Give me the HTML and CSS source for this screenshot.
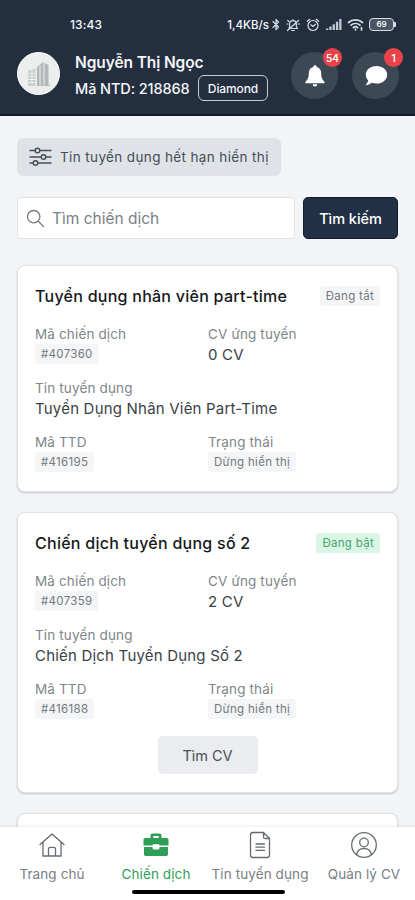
FILE: index.html
```html
<!DOCTYPE html>
<html lang="vi">
<head>
<meta charset="utf-8">
<meta name="viewport" content="width=device-width, initial-scale=1">
<title>Chiến dịch</title>
<link rel="stylesheet" href="styles.css">
</head>
<body>
<div class="app">
  <header class="header">
    <div class="status">
      <span class="clock">13:43</span>
      <div class="status-right">
        <span class="rate">1,4KB/s</span>
        <svg class="s-bt" width="8" height="13" viewBox="0 0 8 13"><path d="M1 3.500 6.500 9 4 11.500v-10L6.500 4 1 9.500"/></svg>
        <svg class="s-mute" width="14" height="14" viewBox="0 0 14 14"><path d="M3 10.500h8.500L10.300 8.500V6A3.300 3.300 0 0 0 3.700 6v2.500zM7 2.700V1.500M5.700 12.500h2.600M12.500 2.500l-11 10M1 6h1M12 6h1.500M1.800 2.500l1 1"/></svg>
        <svg class="s-alarm" width="14" height="14" viewBox="0 0 14 14"><circle cx="7" cy="7.500" r="5"/><path d="M4.800 6.800 7 8.500l2.300-2M1.300 3.300l2.500-2M12.700 3.300l-2.500-2"/></svg>
        <svg class="s-signal" width="17" height="13" viewBox="0 0 17 13"><path d="M1 10.500h2.300V12H1zM4.300 8.500h2.300V12H4.300zM7.600 6.200h2.300V12H7.600zM10.900 3.700h2.300V12h-2.300zM14.200 1h2.300v11h-2.300z"/></svg>
        <svg class="s-wifi" width="18" height="13" viewBox="0 0 18 13"><path d="M1.500 4.500a10.500 10.500 0 0 1 14 0M4 7.200a6.800 6.800 0 0 1 9 0M6.300 9.600a3.500 3.500 0 0 1 4.400 0"/><path d="M8.500 12v-1M14.500 9.500V12"/></svg>
        <span class="battery"><span class="battery-cell">69</span><span class="battery-tip"></span></span>
      </div>
    </div>
    <div class="profile">
      <div class="avatar">
        <svg width="24" height="26" viewBox="0 0 24 26"><path fill="#b4b6b8" d="M10 6 16 1l5.500 3v20H23v1H10z"/><path fill="#c8cacb" d="M1 10l7.500-2.500V25H1z"/><path stroke="#eceded" stroke-width="1" fill="none" d="M1 12.500h7M1 15.500h7M1 18.500h7M1 21.500h7M5 9v15M9.300 6v19M13 5v19M17 2v22"/></svg>
      </div>
      <div class="who">
        <div class="name">Nguyễn Thị Ngọc</div>
        <div class="code-row"><span class="code">Mã NTD: 218868</span><span class="tier">Diamond</span></div>
      </div>
      <div class="actions">
        <div class="round">
          <svg width="22" height="24" viewBox="0 0 22 24"><path fill="#fff" d="M11 1.200c-1 0-1.700.7-1.700 1.700C6.300 3.700 4.800 6 4.800 9c0 4.500-1 6.500-3.300 8.700v1.600h19v-1.600C18.200 15.500 17.200 13.500 17.200 9c0-3-1.500-5.300-4.500-6.100 0-1-.7-1.700-1.700-1.700zM8.700 20.300a2.300 2.300 0 0 0 4.600 0z"/></svg>
          <span class="badge">54</span>
        </div>
        <div class="round">
          <svg width="24" height="22" viewBox="0 0 24 22"><path fill="#fff" d="M12.500 1C6.500 1 1.800 4.800 1.800 9.700c0 2.200.9 4.100 2.400 5.600-.3 1.800-1.200 3.300-2.700 4.900 2.400 0 4.500-.7 6.200-2.400 1.500.5 3.100.8 4.800.8 6 0 10.700-3.900 10.700-8.900S18.500 1 12.500 1z"/></svg>
          <span class="badge">1</span>
        </div>
      </div>
    </div>
  </header>

  <main class="content">
    <div class="filter">
      <svg width="23" height="20" viewBox="0 0 23 20"><path d="M1 3.500h5M11 3.500h11M1 10h11M17 10h5M1 16h3M9 16h13"/><circle cx="8.500" cy="3.500" r="2.300"/><circle cx="14.500" cy="10" r="2.300"/><circle cx="6.500" cy="16" r="2.300"/></svg>
      <span>Tin tuyển dụng hết hạn hiển thị</span>
    </div>
    <div class="search">
      <div class="search-box">
        <svg width="19" height="19" viewBox="0 0 19 19"><circle cx="7.700" cy="7.700" r="6.200"/><path d="m12.300 12.300 5.200 5.200"/></svg>
        <span>Tìm chiến dịch</span>
      </div>
      <div class="search-btn"><span>Tìm kiếm</span></div>
    </div>

    <section class="card">
      <div class="card-head"><h2>Tuyển dụng nhân viên part-time</h2><span class="tag">Đang tắt</span></div>
      <div class="fields">
        <div class="field"><span class="label">Mã chiến dịch</span><span class="tag">#407360</span></div>
        <div class="field"><span class="label">CV ứng tuyển</span><span class="value">0 CV</span></div>
        <div class="field wide"><span class="label">Tin tuyển dụng</span><span class="value">Tuyển Dụng Nhân Viên Part-Time</span></div>
        <div class="field"><span class="label">Mã TTD</span><span class="tag">#416195</span></div>
        <div class="field"><span class="label">Trạng thái</span><span class="tag">Dừng hiển thị</span></div>
      </div>
    </section>

    <section class="card">
      <div class="card-head"><h2>Chiến dịch tuyển dụng số 2</h2><span class="tag on">Đang bật</span></div>
      <div class="fields">
        <div class="field"><span class="label">Mã chiến dịch</span><span class="tag">#407359</span></div>
        <div class="field"><span class="label">CV ứng tuyển</span><span class="value">2 CV</span></div>
        <div class="field wide"><span class="label">Tin tuyển dụng</span><span class="value">Chiến Dịch Tuyển Dụng Số 2</span></div>
        <div class="field"><span class="label">Mã TTD</span><span class="tag">#416188</span></div>
        <div class="field"><span class="label">Trạng thái</span><span class="tag">Dừng hiển thị</span></div>
      </div>
      <div class="find">Tìm CV</div>
    </section>

    <section class="card peek"></section>
  </main>

  <nav class="tabs">
    <div class="tab-row">
      <div class="tab">
        <svg width="28" height="28" viewBox="0 0 28 28"><path d="M2 13.500 14 3l12 10.500M5 11.500V25h18V11.500M10.500 25v-7c0-1 .7-1.700 1.700-1.700h3.600c1 0 1.700.7 1.700 1.700v7"/></svg>
        <span>Trang chủ</span>
      </div>
      <div class="tab active">
        <svg width="28" height="28" viewBox="0 0 28 28"><path class="solid" d="M8.500 7V4.500C8.500 3.300 9.300 2.500 10.500 2.500h7c1.200 0 2 .8 2 2V7h5.200c1 0 1.800.8 1.800 1.800v5.700h-9c0-.8-.5-1.300-1.300-1.300h-4.400c-.8 0-1.300.5-1.300 1.300h-9V8.800C1.500 7.800 2.300 7 3.300 7zm2.800 0h5.400V5h-5.400zM2 16h8.500v.7c0 1 .7 1.800 1.700 1.800h3.600c1 0 1.700-.8 1.700-1.800V16H26v7.200c0 1-.8 1.800-1.800 1.800H3.800c-1 0-1.800-.8-1.800-1.800z"/></svg>
        <span>Chiến dịch</span>
      </div>
      <div class="tab">
        <svg width="28" height="28" viewBox="0 0 28 28"><path d="M17.500 1.500H7C5.500 1.500 4.500 2.500 4.500 4v20c0 1.500 1 2.500 2.500 2.500h14c1.500 0 2.500-1 2.500-2.500V7.500zV6c0 1 .5 1.500 1.500 1.500h4.500M10 13h8.500M10 16.200h8.500M10 19.400h8.500"/></svg>
        <span>Tin tuyển dụng</span>
      </div>
      <div class="tab">
        <svg width="28" height="28" viewBox="0 0 28 28"><circle cx="14" cy="14" r="12.300"/><circle cx="14" cy="11.500" r="4.300"/><path d="M6.500 23.500c.8-4 3.500-6 7.500-6s6.700 2 7.500 6"/></svg>
        <span>Quản lý CV</span>
      </div>
    </div>
    <div class="home-bar"></div>
  </nav>
</div>
</body>
</html>
```
FILE: styles.css
```css
* { box-sizing: border-box; }
body { margin: 0; font-family: Inter, "Noto Sans", sans-serif; color: #2f3438; }
.app { width: 415px; height: 900px; display: flex; flex-direction: column; overflow: hidden; background: #f2f4f6; white-space: nowrap; }
svg { display: block; flex: none; fill: none; stroke-linecap: round; stroke-linejoin: round; }

.header { flex: none; height: 116px; background: #232f3f; border-bottom: 2px solid #101c2c; color: #f4f6f8; }
.status { height: 49px; padding: 0 19px 0 70px; display: flex; align-items: center; justify-content: space-between; font-size: 12px; font-weight: 500; }
.clock { font-size: 12px; letter-spacing: .1px; }
.status-right { display: flex; align-items: center; }
.status-right svg { stroke: #d9dee4; stroke-width: 1.2; }
.rate { font-size: 11.5px; letter-spacing: 0; margin-right: 3px; }
.s-mute, .s-alarm { margin-left: 6px; }
.status-right .s-signal { margin-left: 5px; fill: #c3cad1; stroke: none; }
.status-right .s-wifi { margin-left: 5px; stroke-width: 1.7; }
.battery { display: flex; align-items: center; margin-left: 4px; }
.battery-cell { width: 25px; height: 13px; border: 1.5px solid #d9dee4; border-radius: 4px; font-size: 8px; line-height: 11px; text-align: center; font-weight: 600; background: #4a5563; }
.battery-tip { width: 2px; height: 5px; background: #d9dee4; border-radius: 0 1px 1px 0; }

.profile { display: flex; align-items: flex-start; padding: 3px 16px 0 17px; }
.avatar { width: 43px; height: 43px; border-radius: 50%; background: #eceded; border: 1px solid #fff; display: flex; align-items: center; justify-content: center; }
.who { margin-left: 15px; flex: 1; }
.name { font-size: 15.5px; line-height: 22px; font-weight: 600; letter-spacing: -.1px; }
.code-row { display: flex; align-items: center; height: 26px; margin-top: 1px; }
.code { width: 115px; font-size: 14.5px; font-weight: 500; letter-spacing: -.1px; }
.tier { width: 70px; height: 26px; margin-left: 8px; border: 1.5px solid #c7ccd2; border-radius: 6px; font-size: 12px; font-weight: 500; letter-spacing: -.1px; display: flex; align-items: center; justify-content: center; }
.actions { display: flex; gap: 14px; }
.round { position: relative; width: 47px; height: 47px; border-radius: 50%; background: #3d4855; display: flex; align-items: center; justify-content: center; }
.badge { position: absolute; top: -4px; right: -4px; width: 19px; height: 19px; border-radius: 50%; background: #e9434a; font-size: 10px; line-height: 21px; font-weight: 600; text-align: center; color: #fff; }

.content { flex: 1; min-height: 0; overflow: hidden; padding: 22px 17px 0; }
.filter { width: 264px; height: 38px; padding-left: 12px; border-radius: 6px; background: #dfe3e7; display: flex; align-items: center; gap: 8px; font-size: 13.5px; letter-spacing: .37px; color: #454d55; }
.filter svg { stroke: #454d55; stroke-width: 1.4; }
.search { display: flex; gap: 8px; height: 42px; margin: 21px 0 26px; }
.search-box { flex: 1; border: 1px solid #dfe3e6; border-radius: 5px; background: #fff; display: flex; align-items: center; gap: 7px; padding: 1px 0 0 8px; font-size: 15.5px; color: #7c8186; }
.search-box svg { stroke: #777c81; stroke-width: 1.3; }
.search-btn { width: 95px; padding-top: 1px; border-radius: 5px; background: #213044; border: 1px solid #111e30; color: #fff; font-size: 14.5px; font-weight: 500; letter-spacing: -.05px; display: flex; align-items: center; justify-content: center; }

.card { background: #fff; border: 1px solid #e0e3e6; border-radius: 8px; padding: 18px 17px; box-shadow: 0 1px 2px rgba(30, 40, 50, .22); margin-bottom: 20px; }
.card-head { display: flex; align-items: center; justify-content: space-between; height: 24px; margin-bottom: 16px; }
h2 { margin: 0; font-size: 16px; font-weight: 500; letter-spacing: .26px; color: #15181b; }
.tag { display: flex; align-items: center; height: 20px; padding: 0 6px; border-radius: 3px; background: #f3f5f7; color: #73797f; font-size: 11.5px; letter-spacing: .3px; }
.tag.on { background: #dcf6e5; color: #46a673; }
.fields { display: grid; grid-template-columns: 173px 1fr; row-gap: 13px; }
.field { display: flex; flex-direction: column; align-items: flex-start; height: 41px; }
.wide { grid-column: 1 / 3; }
.label { font-size: 13.5px; line-height: 20px; letter-spacing: .14px; color: #80868b; }
.value { font-size: 15px; line-height: 22px; letter-spacing: .2px; color: #3c4146; }
.find { width: 100px; height: 38px; margin: 16px auto 0; border-radius: 5px; background: #eaecef; font-size: 14.5px; color: #4a5057; display: flex; align-items: center; justify-content: center; }
.peek { height: 80px; }

.tabs { flex: none; height: 73px; background: #fff; display: flex; flex-direction: column; align-items: center; box-shadow: 0 -1px 2px rgba(30, 40, 50, .08); position: relative; }
.tab-row { display: grid; grid-template-columns: repeat(4, 104px); width: 415px; height: 63px; padding-top: 4px; }
.tab { display: flex; flex-direction: column; align-items: center; font-size: 13.5px; line-height: 20px; letter-spacing: .1px; color: #7a8086; }
.tab svg { stroke: #656b71; stroke-width: 1.3; margin-bottom: 5px; }
.tab.active { color: #2f9e57; }
.tab .solid { fill: #2f9e57; stroke: none; fill-rule: evenodd; }
.home-bar { width: 153px; height: 4px; border-radius: 2px; background: #000; margin-left: 1px; }
```
